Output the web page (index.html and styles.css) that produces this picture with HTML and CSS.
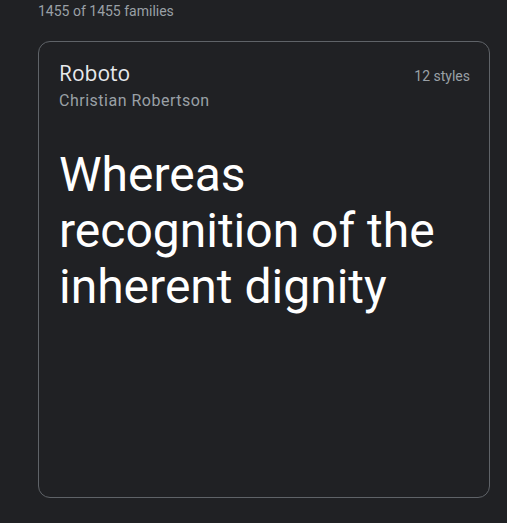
FILE: index.html
```html
<!DOCTYPE html>
<html>
<head>
<meta charset="utf-8">
<link rel="stylesheet" href="styles.css">
</head>
<body>
<div class="page">
  <div class="count">1455 of 1455 families</div>
  <div class="card">
    <div class="card-head">
      <div class="names">
        <div class="family">Roboto</div>
        <div class="designer">Christian Robertson</div>
      </div>
      <div class="styles">12 styles</div>
    </div>
    <div class="sample">Whereas recognition of the inherent dignity</div>
  </div>
</div>
</body>
</html>
```
FILE: styles.css
```css
html, body {
  margin: 0;
  padding: 0;
  background: #202124;
  height: 100%;
}
.page {
  padding: 0 17px 0 38px;
  font-family: Roboto, "Noto Sans", sans-serif;
}
.count {
  font-size: 14px;
  line-height: 20px;
  color: #9aa0a6;
  padding-top: 1px;
}
.card {
  margin-top: 20px;
  border: 1px solid #5f6368;
  border-radius: 12px;
  padding: 17px 19px 20px 20px;
  box-sizing: border-box;
  height: 457px;
}
.card-head {
  display: flex;
  justify-content: space-between;
  align-items: flex-start;
}
.family {
  font-size: 21px;
  line-height: 28px;
  color: #e8eaed;
  font-family: "Open Sans", Roboto, sans-serif;
}
.designer {
  margin-top: 2px;
  font-size: 16px;
  line-height: 24px;
  letter-spacing: 0.5px;
  color: #9aa0a6;
}
.styles {
  font-size: 14px;
  line-height: 20px;
  color: #9aa0a6;
  padding-top: 7px;
}
.sample {
  margin-top: 34px;
  font-size: 48px;
  line-height: 56px;
  color: #ffffff;
}
```
